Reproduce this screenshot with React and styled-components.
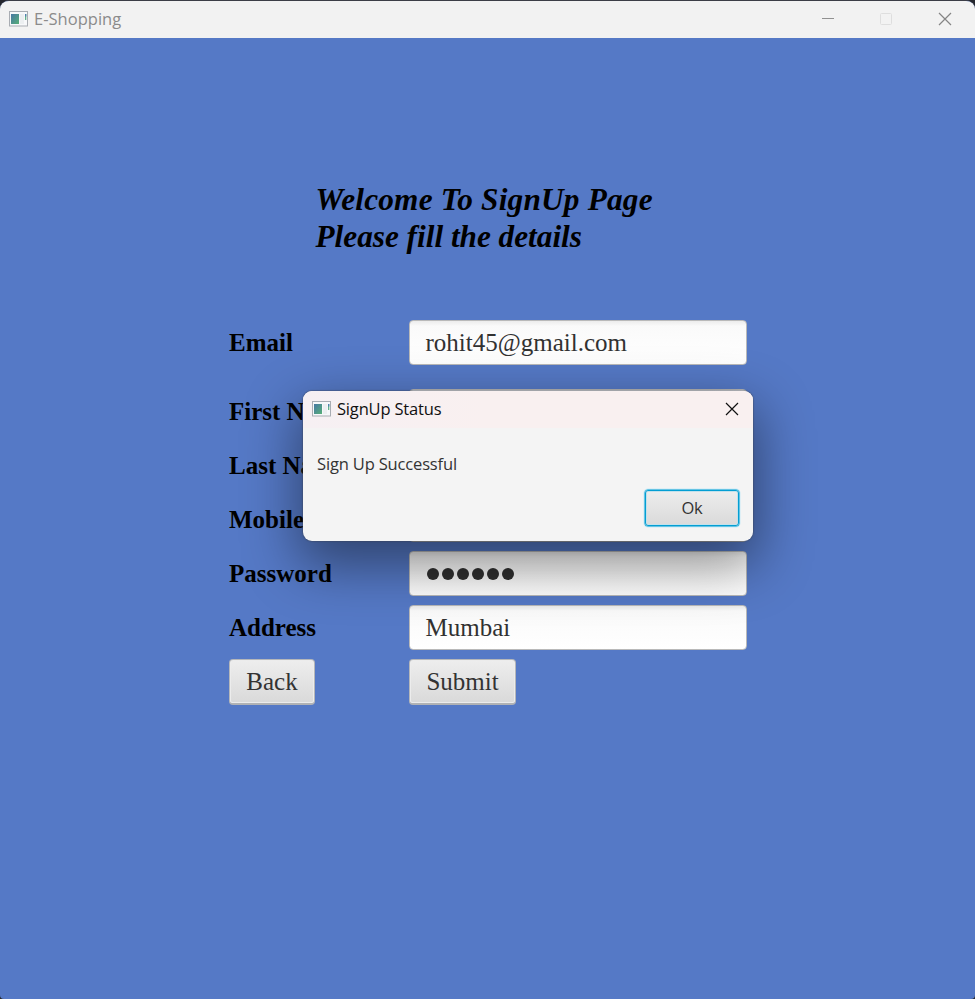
import React from 'react';
import styled, { createGlobalStyle } from 'styled-components';

const GlobalStyle = createGlobalStyle`
  * { box-sizing: border-box; }
  html, body { margin: 0; background: #25272e; overflow: hidden; }
`;

const Window = styled.main`
  position: relative;
  width: 975px;
  height: 999px;
  border-top: 1px solid #3c3e47;
  background: #5579c6;
  border-radius: 9px 9px 4px 4px;
  overflow: hidden;
`;

const TitleBar = styled.header`
  display: flex;
  align-items: center;
  height: 37px;
  padding: 0 23px 2px 9px;
  background: #f2f2f2;
`;

const Title = styled.span`
  flex: 1;
  margin-left: 6px;
  font: 16.5px/22px 'Open Sans', sans-serif;
  letter-spacing: ${(p) => p.$tracking};
  color: ${(p) => p.$color};
  white-space: nowrap;
`;

const Controls = styled.div`
  display: flex;
  gap: 44px;
  svg { display: block; }
  svg:last-child { margin-left: 1px; }
`;

const Page = styled.section`
  padding: 143px 0 0 229px;
`;

const Heading = styled.h1`
  margin: 0 0 65px 86.5px;
  font: italic bold 31.25px/37px 'Liberation Serif', serif;
  color: #000;
  white-space: nowrap;
`;

const HeadingLine = styled.span`
  display: block;
  letter-spacing: ${(p) => p.$tracking || 'normal'};
`;

const Label = styled.label`
  font: bold 25px/30px 'Liberation Serif', serif;
  color: #000;
`;

const Field = styled.div`
  display: flex;
  align-items: center;
  height: 45px;
  padding: 1px 15.5px 0;
  border: 1px solid #b9b9b9;
  border-radius: 4px;
  background: linear-gradient(#ececec, #fafafa 5px, #fff);
  font: 25px/30px 'Liberation Serif', serif;
  color: #323232;
`;

const Dots = styled.span`
  display: flex;
  gap: 3px;
  margin-left: 1px;
`;

const Dot = styled.i`
  width: 12px;
  height: 12px;
  border-radius: 50%;
  background: #303030;
`;

const Gap = styled.div`
  grid-column: 1 / -1;
  height: 6px;
`;

const FormButton = styled.button`
  justify-self: start;
  width: ${(p) => p.$width};
  height: 46px;
  padding: 1px 0 0;
  border: 1px solid #b5b7ba;
  border-bottom: 2px solid #b0b2b5;
  border-radius: 4px;
  background: linear-gradient(#eee, #d9d9d9);
  box-shadow: inset 0 0 0 1px #ececec;
  font: 25px/30px 'Liberation Serif', serif;
  color: #333;
`;

const Form = styled.div`
  display: grid;
  grid-template-columns: 180px 338px;
  grid-template-rows: 45px 6px;
  grid-auto-rows: 45px;
  row-gap: 9px;
  align-items: center;
`;

const Dialog = styled.section`
  position: absolute;
  left: 303px;
  top: 390px;
  width: 450px;
  height: 150px;
  border-radius: 9px;
  background: #f4f4f4;
  box-shadow: 0 0 1px 1px rgba(60, 65, 80, 0.35), 0 20px 54px 5px rgba(0, 0, 0, 0.44);
`;

const DialogBar = styled.header`
  display: flex;
  align-items: center;
  height: 37px;
  padding: 0 14px 2px 9px;
  border-radius: 9px 9px 0 0;
  background: linear-gradient(90deg, #f6f0f3, #f9f0f0 40%);
`;

const Message = styled.p`
  margin: 25px 0 0 14px;
  font: 16.5px/22px 'Open Sans', sans-serif;
  letter-spacing: -0.16px;
  color: #333;
`;

const Actions = styled.div`
  display: flex;
  justify-content: flex-end;
  padding: 15px 14px 0 0;
`;

const OkButton = styled.button`
  width: 94px;
  height: 36px;
  padding: 0;
  border: 1px solid #039ed3;
  border-radius: 3px;
  background: linear-gradient(#ededed, #dadada);
  box-shadow: 0 0 0 0.5px #039ed3, 0 0 0 1.5px #c9eaf5, inset 0 0 0 1px #c2e1eb;
  font: 16.5px/22px 'Open Sans', sans-serif;
  letter-spacing: -0.3px;
  color: #333;
`;

function AppIcon() {
  return (
    <svg width="19" height="16" viewBox="0 0 19 16">
      <defs>
        <linearGradient id="screen" x1="0" y1="0" x2="1" y2="1">
          <stop offset="0" stopColor="#4778a4" />
          <stop offset="1" stopColor="#57af78" />
        </linearGradient>
      </defs>
      <rect x="0.5" y="0.5" width="18" height="14.5" fill="#f7f8fa" stroke="#a9adb3" />
      <rect x="2" y="3" width="8" height="10" fill="url(#screen)" />
      <rect x="11" y="3" width="4" height="10" fill="#eceff1" />
      <path d="M16 3h1.3v6H16z" fill="#62b38a" />
      <path d="M16 3h1.3v2.5H16z" fill="#5080b0" />
    </svg>
  );
}

function CloseIcon({ color }) {
  return (
    <svg width="14" height="14" viewBox="0 0 14 14">
      <path d="M1 1l12 12M13 1L1 13" stroke={color} strokeWidth="1.2" />
    </svg>
  );
}

export default function App() {
  return (
    <>
      <GlobalStyle />
      <Window>
        <TitleBar>
          <AppIcon />
          <Title $color="#8b8b8b" $tracking="0.02px">E-Shopping</Title>
          <Controls>
            <svg width="14" height="14" viewBox="0 0 14 14">
              <path d="M1 6.5h12" stroke="#919191" />
            </svg>
            <svg width="14" height="14" viewBox="0 0 14 14">
              <rect x="1.5" y="1.5" width="11" height="11" rx="1" fill="none" stroke="#dedede" />
            </svg>
            <CloseIcon color="#858585" />
          </Controls>
        </TitleBar>
        <Page>
          <Heading>
            <HeadingLine $tracking="0.22px">Welcome To SignUp Page</HeadingLine>
            <HeadingLine>Please fill the details</HeadingLine>
          </Heading>
          <Form>
            <Label>Email</Label>
            <Field>rohit45@gmail.com</Field>
            <Gap />
            <Label>First Name</Label>
            <Field />
            <Label>Last Name</Label>
            <Field />
            <Label>Mobile No</Label>
            <Field />
            <Label>Password</Label>
            <Field><Dots>{Array.from({ length: 6 }, (_, i) => <Dot key={i} />)}</Dots></Field>
            <Label>Address</Label>
            <Field>Mumbai</Field>
            <FormButton $width="86px">Back</FormButton>
            <FormButton $width="107px">Submit</FormButton>
          </Form>
        </Page>
        <Dialog role="dialog">
          <DialogBar>
            <AppIcon />
            <Title $color="#111" $tracking="-0.18px">SignUp Status</Title>
            <CloseIcon color="#111" />
          </DialogBar>
          <Message>Sign Up Successful</Message>
          <Actions><OkButton>Ok</OkButton></Actions>
        </Dialog>
      </Window>
    </>
  );
}
